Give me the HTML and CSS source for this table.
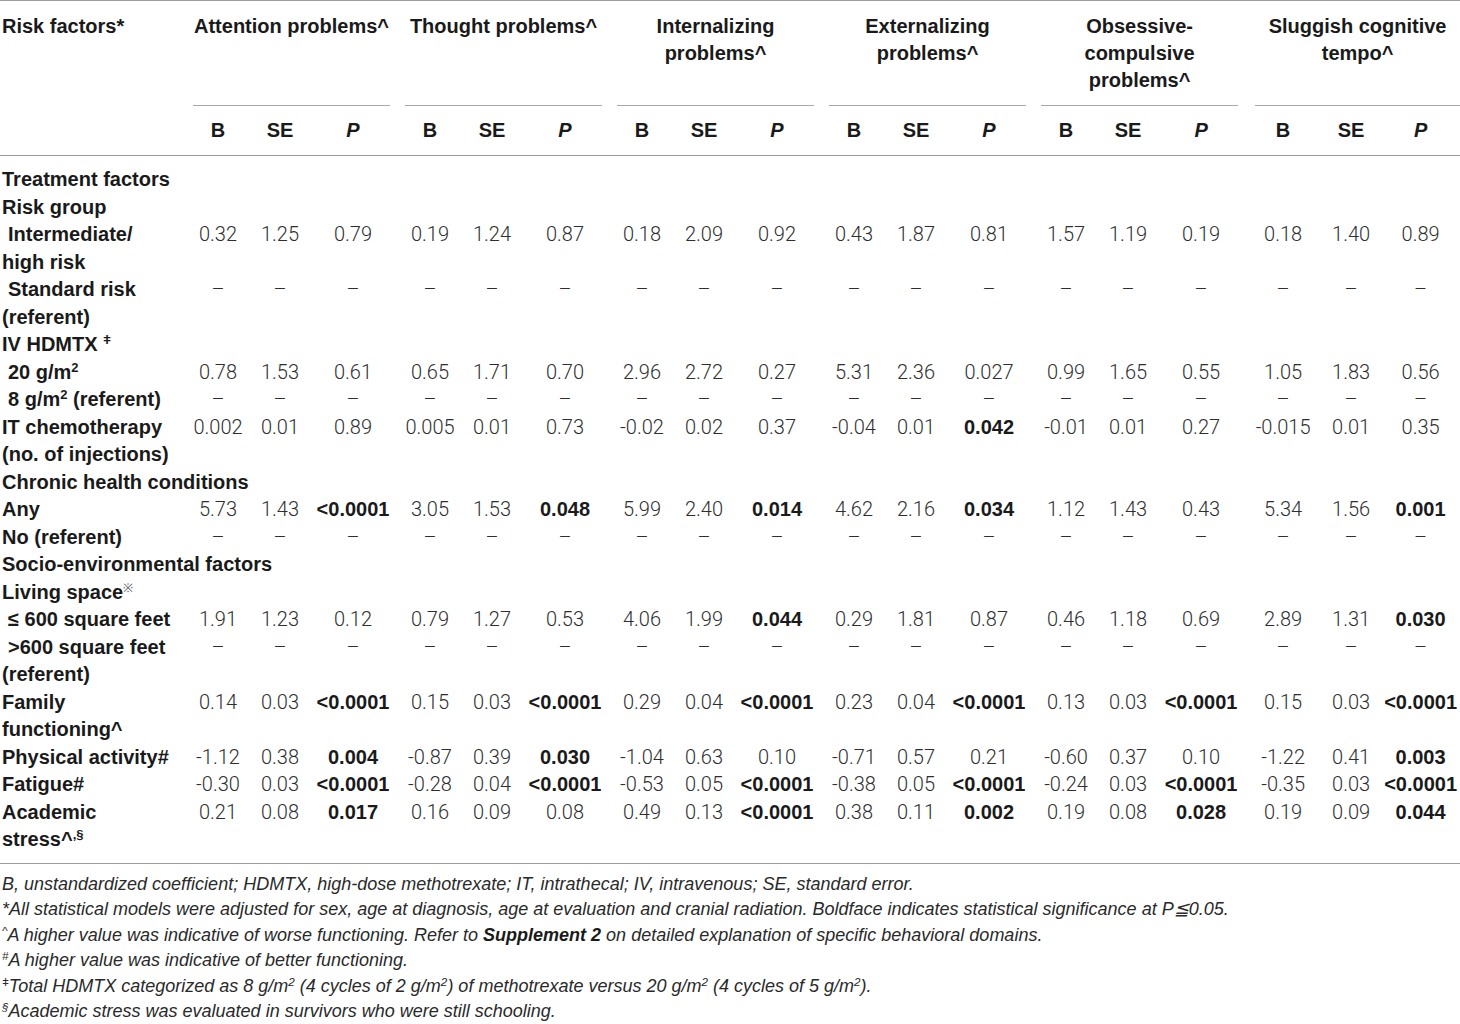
FILE: index.html
```html
<!DOCTYPE html>
<html lang="en">
<head>
	<meta charset="utf-8">
	<title>Risk factors and behavioral outcomes</title>
	<link rel="stylesheet" href="styles.css">
</head>
<body>
<table class="risk-table">
	<colgroup>
		<col class="c-label">
		<col class="c-b"><col class="c-se"><col class="c-p">
		<col class="c-b"><col class="c-se"><col class="c-p">
		<col class="c-b"><col class="c-se"><col class="c-p">
		<col class="c-b"><col class="c-se"><col class="c-p">
		<col class="c-b"><col class="c-se"><col class="c-p">
		<col class="c-b6"><col class="c-se6"><col class="c-p6">
	</colgroup>
	<thead>
		<tr class="head-top">
			<th rowspan="2" class="corner">Risk factors*</th>
			<th colspan="3" class="grp"><div>Attention problems^</div></th>
			<th colspan="3" class="grp"><div>Thought problems^</div></th>
			<th colspan="3" class="grp"><div>Internalizing<br>problems^</div></th>
			<th colspan="3" class="grp"><div>Externalizing<br>problems^</div></th>
			<th colspan="3" class="grp"><div>Obsessive-<br>compulsive<br>problems^</div></th>
			<th colspan="3" class="grp grp-last"><div>Sluggish cognitive<br>tempo^</div></th>
		</tr>
		<tr class="head-sub">
			<th>B</th><th>SE</th><th><i>P</i></th>
			<th>B</th><th>SE</th><th><i>P</i></th>
			<th>B</th><th>SE</th><th><i>P</i></th>
			<th>B</th><th>SE</th><th><i>P</i></th>
			<th>B</th><th>SE</th><th><i>P</i></th>
			<th>B</th><th>SE</th><th><i>P</i></th>
		</tr>
	</thead>
	<tbody>
		<tr class="first"><td class="lbl section" colspan="19">Treatment factors</td></tr>
		<tr><td class="lbl" colspan="19">Risk group</td></tr>
		<tr>
			<td class="lbl sub">Intermediate/<br>high risk</td>
			<td>0.32</td><td>1.25</td><td>0.79</td>
			<td>0.19</td><td>1.24</td><td>0.87</td>
			<td>0.18</td><td>2.09</td><td>0.92</td>
			<td>0.43</td><td>1.87</td><td>0.81</td>
			<td>1.57</td><td>1.19</td><td>0.19</td>
			<td>0.18</td><td>1.40</td><td>0.89</td>
		</tr>
		<tr>
			<td class="lbl sub">Standard risk<br>(referent)</td>
			<td>–</td><td>–</td><td>–</td>
			<td>–</td><td>–</td><td>–</td>
			<td>–</td><td>–</td><td>–</td>
			<td>–</td><td>–</td><td>–</td>
			<td>–</td><td>–</td><td>–</td>
			<td>–</td><td>–</td><td>–</td>
		</tr>
		<tr><td class="lbl" colspan="19">IV HDMTX <sup>ǂ</sup></td></tr>
		<tr>
			<td class="lbl sub">20 g/m<sup>2</sup></td>
			<td>0.78</td><td>1.53</td><td>0.61</td>
			<td>0.65</td><td>1.71</td><td>0.70</td>
			<td>2.96</td><td>2.72</td><td>0.27</td>
			<td>5.31</td><td>2.36</td><td>0.027</td>
			<td>0.99</td><td>1.65</td><td>0.55</td>
			<td>1.05</td><td>1.83</td><td>0.56</td>
		</tr>
		<tr>
			<td class="lbl sub">8 g/m<sup>2</sup> (referent)</td>
			<td>–</td><td>–</td><td>–</td>
			<td>–</td><td>–</td><td>–</td>
			<td>–</td><td>–</td><td>–</td>
			<td>–</td><td>–</td><td>–</td>
			<td>–</td><td>–</td><td>–</td>
			<td>–</td><td>–</td><td>–</td>
		</tr>
		<tr>
			<td class="lbl">IT chemotherapy<br>(no. of injections)</td>
			<td>0.002</td><td>0.01</td><td>0.89</td>
			<td>0.005</td><td>0.01</td><td>0.73</td>
			<td>-0.02</td><td>0.02</td><td>0.37</td>
			<td>-0.04</td><td>0.01</td><td class="sig">0.042</td>
			<td>-0.01</td><td>0.01</td><td>0.27</td>
			<td>-0.015</td><td>0.01</td><td>0.35</td>
		</tr>
		<tr><td class="lbl" colspan="19">Chronic health conditions</td></tr>
		<tr>
			<td class="lbl">Any</td>
			<td>5.73</td><td>1.43</td><td class="sig">&lt;0.0001</td>
			<td>3.05</td><td>1.53</td><td class="sig">0.048</td>
			<td>5.99</td><td>2.40</td><td class="sig">0.014</td>
			<td>4.62</td><td>2.16</td><td class="sig">0.034</td>
			<td>1.12</td><td>1.43</td><td>0.43</td>
			<td>5.34</td><td>1.56</td><td class="sig">0.001</td>
		</tr>
		<tr>
			<td class="lbl">No (referent)</td>
			<td>–</td><td>–</td><td>–</td>
			<td>–</td><td>–</td><td>–</td>
			<td>–</td><td>–</td><td>–</td>
			<td>–</td><td>–</td><td>–</td>
			<td>–</td><td>–</td><td>–</td>
			<td>–</td><td>–</td><td>–</td>
		</tr>
		<tr><td class="lbl" colspan="19">Socio-environmental factors</td></tr>
		<tr><td class="lbl" colspan="19">Living space<sup class="ref">※</sup></td></tr>
		<tr>
			<td class="lbl sub">≤ 600 square feet</td>
			<td>1.91</td><td>1.23</td><td>0.12</td>
			<td>0.79</td><td>1.27</td><td>0.53</td>
			<td>4.06</td><td>1.99</td><td class="sig">0.044</td>
			<td>0.29</td><td>1.81</td><td>0.87</td>
			<td>0.46</td><td>1.18</td><td>0.69</td>
			<td>2.89</td><td>1.31</td><td class="sig">0.030</td>
		</tr>
		<tr>
			<td class="lbl sub">&gt;600 square feet<br>(referent)</td>
			<td>–</td><td>–</td><td>–</td>
			<td>–</td><td>–</td><td>–</td>
			<td>–</td><td>–</td><td>–</td>
			<td>–</td><td>–</td><td>–</td>
			<td>–</td><td>–</td><td>–</td>
			<td>–</td><td>–</td><td>–</td>
		</tr>
		<tr>
			<td class="lbl">Family<br>functioning^</td>
			<td>0.14</td><td>0.03</td><td class="sig">&lt;0.0001</td>
			<td>0.15</td><td>0.03</td><td class="sig">&lt;0.0001</td>
			<td>0.29</td><td>0.04</td><td class="sig">&lt;0.0001</td>
			<td>0.23</td><td>0.04</td><td class="sig">&lt;0.0001</td>
			<td>0.13</td><td>0.03</td><td class="sig">&lt;0.0001</td>
			<td>0.15</td><td>0.03</td><td class="sig">&lt;0.0001</td>
		</tr>
		<tr>
			<td class="lbl">Physical activity#</td>
			<td>-1.12</td><td>0.38</td><td class="sig">0.004</td>
			<td>-0.87</td><td>0.39</td><td class="sig">0.030</td>
			<td>-1.04</td><td>0.63</td><td>0.10</td>
			<td>-0.71</td><td>0.57</td><td>0.21</td>
			<td>-0.60</td><td>0.37</td><td>0.10</td>
			<td>-1.22</td><td>0.41</td><td class="sig">0.003</td>
		</tr>
		<tr>
			<td class="lbl">Fatigue#</td>
			<td>-0.30</td><td>0.03</td><td class="sig">&lt;0.0001</td>
			<td>-0.28</td><td>0.04</td><td class="sig">&lt;0.0001</td>
			<td>-0.53</td><td>0.05</td><td class="sig">&lt;0.0001</td>
			<td>-0.38</td><td>0.05</td><td class="sig">&lt;0.0001</td>
			<td>-0.24</td><td>0.03</td><td class="sig">&lt;0.0001</td>
			<td>-0.35</td><td>0.03</td><td class="sig">&lt;0.0001</td>
		</tr>
		<tr class="last">
			<td class="lbl">Academic<br>stress^<sup>,§</sup></td>
			<td>0.21</td><td>0.08</td><td class="sig">0.017</td>
			<td>0.16</td><td>0.09</td><td>0.08</td>
			<td>0.49</td><td>0.13</td><td class="sig">&lt;0.0001</td>
			<td>0.38</td><td>0.11</td><td class="sig">0.002</td>
			<td>0.19</td><td>0.08</td><td class="sig">0.028</td>
			<td>0.19</td><td>0.09</td><td class="sig">0.044</td>
		</tr>
	</tbody>
</table>

<div class="notes">
	<p>B, unstandardized coefficient; HDMTX, high-dose methotrexate; IT, intrathecal; IV, intravenous; SE, standard error.</p>
	<p>*All statistical models were adjusted for sex, age at diagnosis, age at evaluation and cranial radiation. Boldface indicates statistical significance at P≦0.05.</p>
	<p><sup>^</sup>A higher value was indicative of worse functioning. Refer to <b>Supplement 2</b> on detailed explanation of specific behavioral domains.</p>
	<p><sup>#</sup>A higher value was indicative of better functioning.</p>
	<p><sup>ǂ</sup>Total HDMTX categorized as 8 g/m<sup>2</sup> (4 cycles of 2 g/m<sup>2</sup>) of methotrexate versus 20 g/m<sup>2</sup> (4 cycles of 5 g/m<sup>2</sup>).</p>
	<p><sup>§</sup>Academic stress was evaluated in survivors who were still schooling.</p>
</div>
</body>
</html>
```

FILE: styles.css
```css
body {
    margin: 0;
    background: #ffffff;
    color: #1c1c1c;
    font-family: 'Liberation Sans', Arial, sans-serif;
}

.risk-table {
    width: 1460px;
    table-layout: fixed;
    border-collapse: collapse;
    border-top: 1px solid #9c9c9c;
}

.c-label { width: 185px; }
.c-b { width: 66px; }
.c-se { width: 58px; }
.c-p { width: 88px; }
.c-b6 { width: 76px; }
.c-se6 { width: 60px; }
.c-p6 { width: 79px; }

th {
    font-weight: bold;
    font-size: 20px;
    line-height: 27px;
    color: #1a1a1a;
    padding: 0;
}

th.corner {
    text-align: left;
    vertical-align: top;
    padding: 12px 0 0 2px;
    border-bottom: 1px solid #9c9c9c;
}

th.grp {
    padding: 0 7px 0 8px;
    vertical-align: top;
}

th.grp div {
    height: 92px;
    padding-top: 12px;
    border-bottom: 1px solid #a8a8a8;
}

th.grp-last {
    padding: 0 0 0 10px;
}

.head-sub th {
    text-align: center;
    padding: 11px 0 11px;
    border-bottom: 1px solid #9c9c9c;
}

.head-sub th i {
    font-style: italic;
}

td {
    padding: 0;
    font-family: 'Roboto', 'Liberation Sans', sans-serif;
    font-weight: 300;
    font-size: 20px;
    line-height: 27.5px;
    color: #2e2e2e;
    text-align: center;
    vertical-align: top;
    white-space: nowrap;
}

td.sig {
    font-family: 'Liberation Sans', Arial, sans-serif;
    font-weight: bold;
    color: #1a1a1a;
}

td.lbl {
    font-family: 'Liberation Sans', Arial, sans-serif;
    font-weight: bold;
    color: #1a1a1a;
    text-align: left;
    padding-left: 2px;
}

td.sub {
    text-indent: 6px;
}

tr.first td {
    padding-top: 10px;
}

tr.last td {
    padding-bottom: 9px;
    border-bottom: 1px solid #9c9c9c;
}

sup {
    font-size: 0.65em;
    line-height: 0;
    vertical-align: 0.55em;
}

sup.ref {
    font-weight: normal;
    font-size: 0.6em;
    color: #555;
}

.notes {
    padding: 8px 0 0 2px;
    font-size: 18px;
    line-height: 25.6px;
    font-style: italic;
    color: #2a2a2a;
}

.notes p {
    margin: 0;
}

.notes b {
    font-weight: bold;
    color: #1a1a1a;
}
```
